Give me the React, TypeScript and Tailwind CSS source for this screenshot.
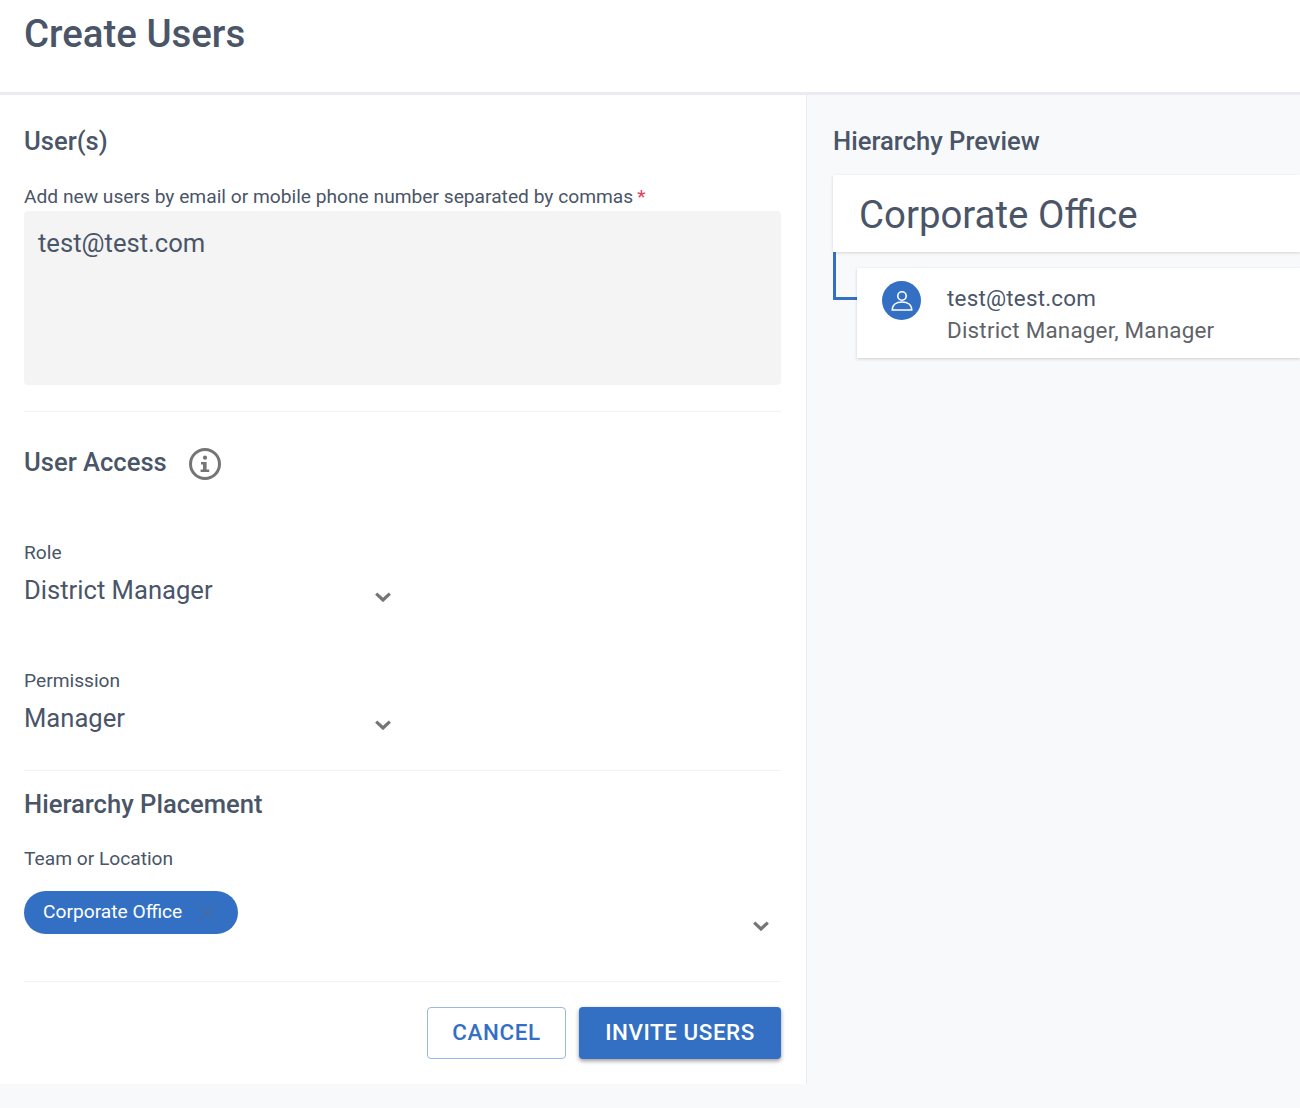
import React from "react";

const Chevron = () => (
  <svg width="16" height="10" viewBox="0 0 16 10" className="block" fill="none">
    <path d="M1.2 1.6 L8 8 L14.8 1.6" stroke="#757575" strokeWidth="3.2" />
  </svg>
);

const Divider = () => <div className="h-px bg-[#f1f2f4]" />;

const SelectRow = ({ label, value, className }: { label: string; value: string; className: string }) => (
  <div className={className}>
    <div className="h-[22px] text-[19.2px] leading-[22px] text-[#4a5568]">{label}</div>
    <div className="flex w-[367px] items-start justify-between">
      <div className="mt-[10px] h-[32px] text-[25.6px] leading-[32px] text-[#4a5568]">{value}</div>
      <div className="mt-[28px]"><Chevron /></div>
    </div>
  </div>
);

export default function App() {
  return (
    <div className="min-h-[1108px] bg-[#f8f9fb] font-['Roboto',sans-serif] text-[#4a5568]">
      <header className="h-[95px] border-b-[3px] border-[#e9ebf0] bg-white px-6 pt-[12px]">
        <h1 className="text-[38.4px] font-medium leading-[44px]">Create Users</h1>
      </header>
      <div className="flex">
        <main className="h-[989px] w-[807px] border-r border-[#e9ebf0] bg-white pl-6 pr-[25px]">
          <h2 className="mt-[31px] text-[25.6px] font-medium leading-[30px]">User(s)</h2>
          <div className="mt-[28px] flex h-[26px] text-[19.2px] leading-[26px]">
            Add new users by email or mobile phone number separated by commas
            <span className="ml-1 text-[#e53e5a]">*</span>
          </div>
          <div className="mt-[1px] h-[174px] rounded bg-[#f4f4f4] px-[14px] pb-[15px] pt-[16px] text-[25.6px] leading-[32px]">test@test.com</div>
          <div className="mt-[26px]"><Divider /></div>

          <div className="mt-[32px] flex h-[36px] items-center">
            <h2 className="text-[25.6px] font-medium leading-[30px]">User Access</h2>
            <svg width="32" height="32" viewBox="0 0 32 32" className="ml-[22px] mt-[3px]" fill="none">
              <circle cx="16" cy="16" r="14.5" stroke="#757575" strokeWidth="3" />
              <circle cx="16" cy="9.7" r="2.1" fill="#757575" />
              <path d="M12 14h5.6v7.4h2.6v2.6h-8.6v-2.6h2.4v-4.8h-2z" fill="#757575" />
            </svg>
          </div>

          <SelectRow label="Role" value="District Manager" className="mt-[62px]" />
          <SelectRow label="Permission" value="Manager" className="mt-[64px]" />

          <div className="mt-[36px]"><Divider /></div>
          <h2 className="mt-[18px] text-[25.6px] font-medium leading-[30px]">Hierarchy Placement</h2>
          <div className="mt-[29px] h-[22px] text-[19.2px] leading-[22px]">Team or Location</div>
          <div className="mt-[21px] flex h-[61px] items-start justify-between pr-[12px]">
            <div className="flex h-[43px] w-[214px] items-center rounded-full bg-[#3370c4] pl-[19px] text-[19.2px] text-white">
              Corporate Office
              <svg width="16" height="16" viewBox="0 0 16 16" className="ml-[17px]" fill="none">
                <path d="M0.5 0.5 L15.5 15.5 M15.5 0.5 L0.5 15.5" stroke="#4a6a9c" strokeWidth="1.5" />
              </svg>
            </div>
            <div className="mt-[30px]"><Chevron /></div>
          </div>
          <div className="mt-[29px]"><Divider /></div>
          <div className="mt-[25px] flex justify-end gap-[13px]">
            <button className="h-[52px] w-[139px] rounded border border-[#99b7e1] bg-white text-[22.4px] font-medium tracking-[0.65px] text-[#3370c4]">CANCEL</button>
            <button className="h-[52px] w-[202px] rounded bg-[#3370c4] text-[22.4px] font-medium tracking-[0.55px] text-white shadow-[0_2px_4px_rgba(0,0,0,0.4)]">INVITE USERS</button>
          </div>
        </main>

        <aside className="min-w-0 flex-1 pl-[26px]">
          <h2 className="mt-[31px] text-[25.6px] font-medium leading-[30px]">Hierarchy Preview</h2>
          <div className="mt-[19px] flex h-[77px] items-center bg-white pl-[26px] pt-[2px] text-[38.4px] shadow-[0_1px_3px_rgba(0,0,0,0.15)]">Corporate Office</div>
          <div className="flex items-start">
            <div className="h-[48px] w-[24px] border-b-[3px] border-l-[3px] border-[#3370c4]" />
            <div className="mt-[16px] flex h-[90px] flex-1 bg-white pl-[25px] shadow-[0_1px_3px_rgba(0,0,0,0.18)]">
              <div className="mt-[13px] flex h-[39px] w-[39px] items-center justify-center rounded-full bg-[#3370c4]">
                <svg width="22" height="24" viewBox="0 0 22 24" fill="none" stroke="#fff" strokeWidth="1.6">
                  <circle cx="11" cy="7" r="4.2" />
                  <path d="M1.3 21c0-5 4-8 9.7-8s9.7 3 9.7 8z" />
                </svg>
              </div>
              <div className="ml-[26px]">
                <div className="mt-[14px] text-[22.4px] leading-[32px] tracking-[0.22px] text-[#4a5568]">test@test.com</div>
                <div className="text-[22.4px] leading-[32px] tracking-[0.22px] text-[#5f6368]">District Manager, Manager</div>
              </div>
            </div>
          </div>
        </aside>
      </div>
    </div>
  );
}
